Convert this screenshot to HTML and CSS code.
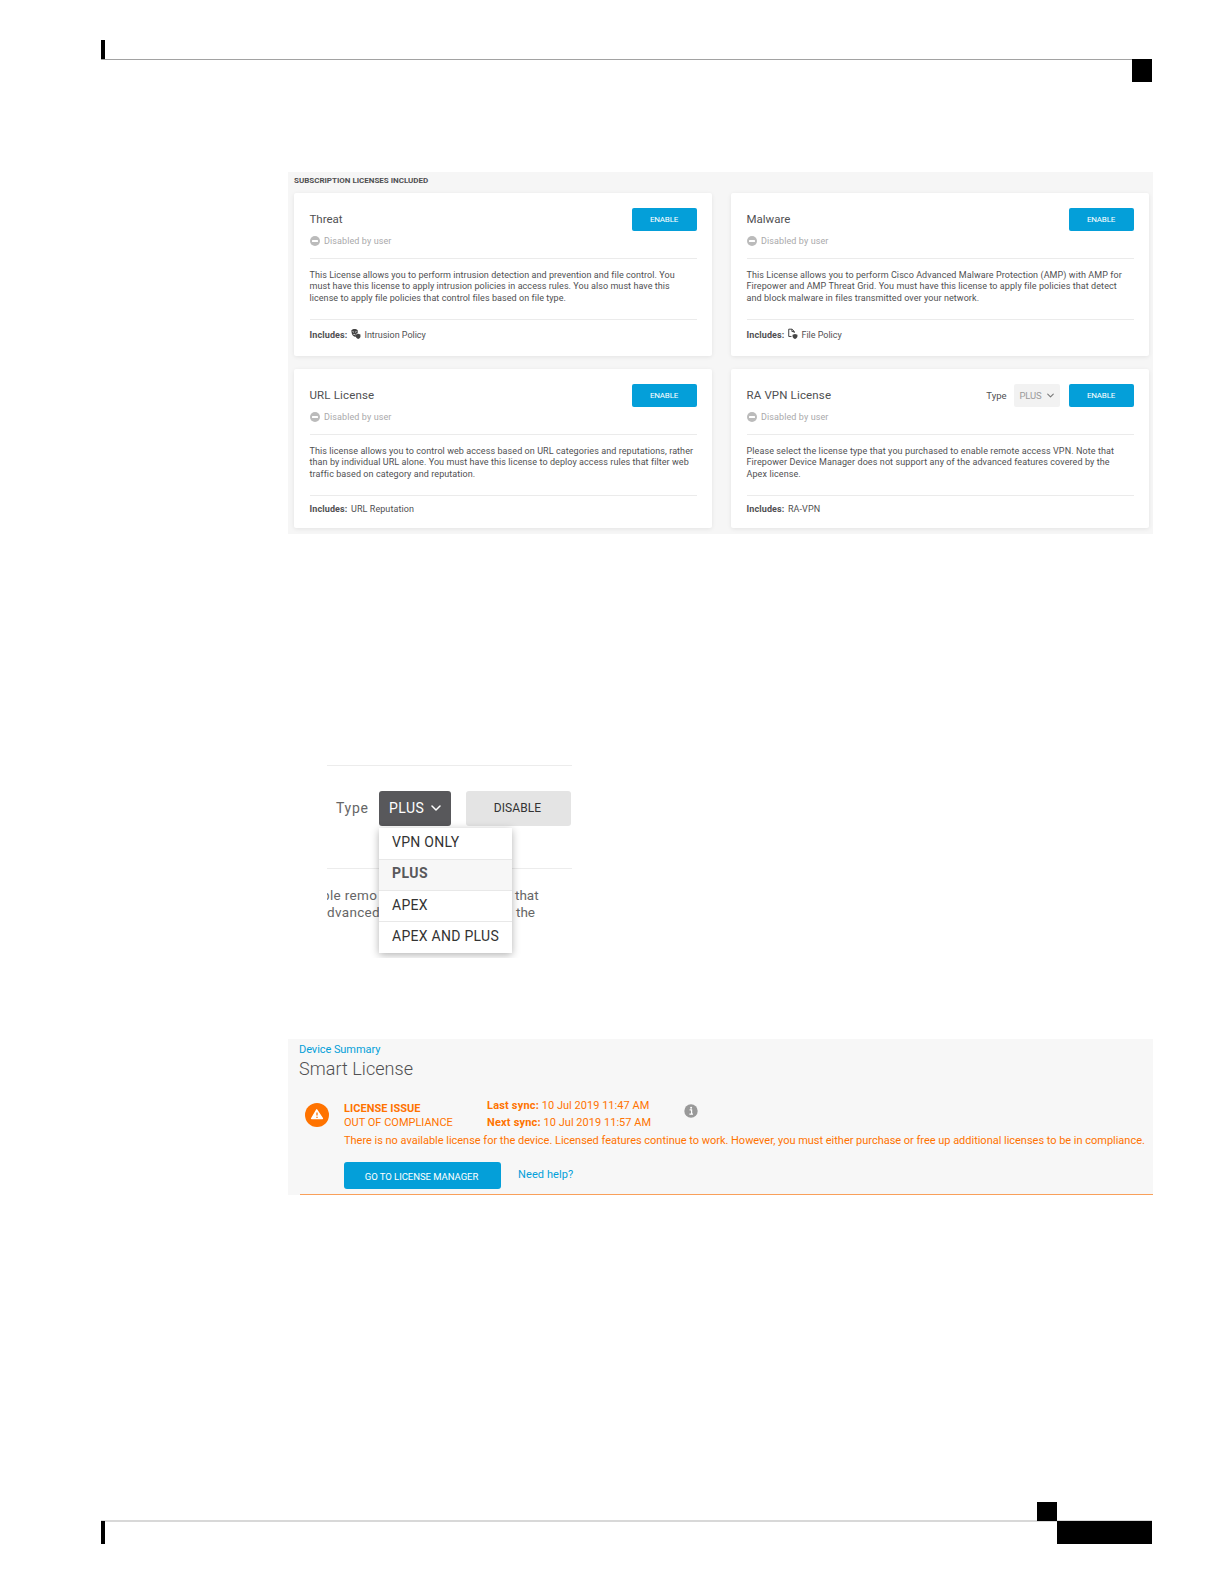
FILE: index.html
```html
<!DOCTYPE html>
<html lang="en">
<head>
<meta charset="utf-8">
<title>Smart License</title>
<link rel="stylesheet" href="styles.css">
</head>
<body>
<svg class="defs" aria-hidden="true">
  <symbol id="minus" viewBox="0 0 10 10"><circle cx="5" cy="5" r="5" fill="#bbb"/><rect x="2" y="4.1" width="6" height="1.8" rx=".5" fill="#fff"/></symbol>
  <symbol id="chevron" viewBox="0 0 10 6"><path d="M1 1l4 4 4-4" fill="none" stroke="currentColor" stroke-width="1.5" stroke-linecap="round" stroke-linejoin="round"/></symbol>
</svg>
<header class="page-head"><i class="head-tick"></i><i class="head-rule"></i><i class="head-box"></i></header>
<main>
  <section class="licenses">
    <h2 class="licenses-title">SUBSCRIPTION LICENSES INCLUDED</h2>
    <div class="cards">
      <article class="card">
        <div class="card-top"><h3>Threat</h3><button class="enable">ENABLE</button></div>
        <p class="status"><svg><use href="#minus"/></svg>Disabled by user</p>
        <p class="desc">This License allows you to perform intrusion detection and prevention and file control. You<br>must have this license to apply intrusion policies in access rules. You also must have this<br>license to apply file policies that control files based on file type.</p>
        <p class="includes"><b>Includes:</b>
          <svg class="inc-icon" viewBox="0 0 11 12"><path d="M.4 2C1.300.8 2.600.4 3.900.4 5.200.4 6.500.8 7.400 2v3.200L5.300 6v3.200C2 9.200.4 6 .4 2z" fill="#444"/><path d="M1.700 3.300l1.600.8M6.100 3.300l-1.600.8M2.600 6.500h2" stroke="#fff" stroke-width=".8"/><path d="M5.400 6.600l2.500-.9 2.500.9v1.900c0 1.500-1 2.400-2.500 3-1.500-.6-2.500-1.500-2.500-3z" fill="#444"/></svg>Intrusion Policy</p>
      </article>
      <article class="card">
        <div class="card-top"><h3>Malware</h3><button class="enable">ENABLE</button></div>
        <p class="status"><svg><use href="#minus"/></svg>Disabled by user</p>
        <p class="desc">This License allows you to perform Cisco Advanced Malware Protection (AMP) with AMP for<br>Firepower and AMP Threat Grid. You must have this license to apply file policies that detect<br>and block malware in files transmitted over your network.</p>
        <p class="includes"><b>Includes:</b>
          <svg class="inc-icon" viewBox="0 0 11 12"><path d="M3.800 8.700H.8V.7h3.700l2.300 2.400v1.800M4.300.7v2.600h2.500" fill="none" stroke="#444" stroke-width="1.100"/><path d="M5 6.900l2.700-.9 2.700.9v1.700c0 1.400-1 2.300-2.700 2.900C6 10.900 5 10 5 8.600z" fill="#444"/></svg>File Policy</p>
      </article>
      <article class="card short">
        <div class="card-top"><h3 class="wide">URL License</h3><button class="enable">ENABLE</button></div>
        <p class="status"><svg><use href="#minus"/></svg>Disabled by user</p>
        <p class="desc">This license allows you to control web access based on URL categories and reputations, rather<br>than by individual URL alone. You must have this license to deploy access rules that filter web<br>traffic based on category and reputation.</p>
        <p class="includes"><b>Includes:</b> URL Reputation</p>
      </article>
      <article class="card short">
        <div class="card-top"><h3 class="wide">RA VPN License</h3><span class="type">Type</span><span class="type-select">PLUS<svg><use href="#chevron"/></svg></span><button class="enable">ENABLE</button></div>
        <p class="status"><svg><use href="#minus"/></svg>Disabled by user</p>
        <p class="desc">Please select the license type that you purchased to enable remote access VPN. Note that<br>Firepower Device Manager does not support any of the advanced features covered by the<br>Apex license.</p>
        <p class="includes"><b>Includes:</b> RA-VPN</p>
      </article>
    </div>
  </section>

  <section class="picker">
    <div class="picker-row">
      <span class="picker-label">Type</span>
      <div class="picker-select"><span>PLUS</span><svg><use href="#chevron"/></svg>
        <ul class="menu"><li>VPN ONLY</li><li class="selected">PLUS</li><li>APEX</li><li>APEX AND PLUS</li></ul>
      </div>
      <button class="disable">DISABLE</button>
    </div>
    <div class="picker-text">
      <div><span class="cut">ble remo</span><span>that</span></div>
      <div><span class="cut second">dvanced</span><span>the</span></div>
    </div>
  </section>

  <section class="summary">
    <a class="crumb">Device Summary</a>
    <h1>Smart License</h1>
    <div class="issue">
      <svg class="warn" viewBox="0 0 24 24"><circle cx="12" cy="12" r="12" fill="#ff7300"/><path d="M11.700 6.800L6.600 15.500h10.800z" fill="#fff" stroke="#fff" stroke-width="1.400" stroke-linejoin="round"/><path d="M12 9.400v3.200M12 13.700v1.400" stroke="#ff7300" stroke-width="1.300"/></svg>
      <div class="issue-body">
        <div class="issue-top">
          <div class="state"><b>LICENSE ISSUE</b><span>OUT OF COMPLIANCE</span></div>
          <div class="sync"><span><b>Last sync:</b> 10 Jul 2019 11:47 AM</span><span><b>Next sync:</b> 10 Jul 2019 11:57 AM</span></div>
          <svg class="info" viewBox="0 0 14 14"><circle cx="7" cy="7" r="6.700" fill="#999"/><path d="M5.600 5.900h2v4M5.400 10.100h3.600" fill="none" stroke="#fff" stroke-width="1.200"/><circle cx="7.100" cy="3.700" r="1" fill="#fff"/></svg>
        </div>
        <p class="message">There is no available license for the device. Licensed features continue to work. However, you must either purchase or free up additional licenses to be in compliance.</p>
        <div class="actions"><button class="manager">GO TO LICENSE MANAGER</button><a class="help">Need help?</a></div>
      </div>
    </div>
  </section>
</main>
<footer class="page-foot"><i class="foot-box"></i><div class="foot-row"><i class="foot-tick"></i><i class="foot-block"></i></div></footer>
</body>
</html>
```
FILE: styles.css
```css
* { box-sizing: border-box; margin: 0; padding: 0; }
body { width: 1224px; height: 1584px; padding: 40px 72px 40px 101px; display: flex; flex-direction: column; background: #fff; color: #505052; font-family: Roboto, "Liberation Sans", sans-serif; overflow: hidden; }
button { border: 0; font-family: inherit; color: #fff; background: #049fd9; white-space: nowrap; }
a { color: #049fd9; }
.defs { position: absolute; width: 0; height: 0; }

.page-head { display: grid; grid-template-columns: 4px 1fr 20px; grid-template-rows: 19px 23px; height: 42px; background: linear-gradient(#a2a2a2, #a2a2a2) 0 19px / 100% 1px no-repeat; }
.head-tick { background: #000; }
.head-box { grid-column: 3; grid-row: 2; background: #000; }

main { flex: 1; margin-left: 187px; width: 865px; }

.licenses { margin-top: 90px; height: 362px; padding: 4px 4px 5px 6px; background: #f6f6f6; }
.licenses-title { height: 17px; font-size: 8px; line-height: 9px; font-weight: 700; letter-spacing: -.01px; }
.cards { display: grid; grid-template-columns: 418px 418px; column-gap: 19px; row-gap: 13px; }
.card { height: 163px; padding: 15px 15.500px 0; background: #fff; border-radius: 2px; box-shadow: 0 1px 4px rgba(0, 0, 0, .08); }
.card.short { height: 159px; }
.card-top { display: flex; height: 23px; align-items: center; }
.card h3 { flex: 1; font-size: 11.500px; font-weight: 400; line-height: 23px; }
.card h3.wide { letter-spacing: .15px; }
.enable { width: 65px; height: 23px; border-radius: 2px; font-size: 8px; letter-spacing: -.2px; }
.type { font-size: 9.500px; }
.type-select { display: flex; align-items: center; gap: 5px; width: 46px; height: 23px; margin: 0 9px 0 7px; padding-left: 6px; background: #f2f2f2; border-radius: 2px; color: #9b9b9b; font-size: 9.500px; letter-spacing: -.15px; }
.type-select svg { width: 7px; height: 5px; color: #777; }
.status { display: flex; align-items: center; gap: 4.500px; height: 28px; padding-bottom: 8px; border-bottom: 1px solid #ebebeb; color: #a9a9ab; font-size: 9px; letter-spacing: .1px; }
.status svg { width: 10px; height: 10px; }
.desc { height: 61px; padding-top: 11px; border-bottom: 1px solid #ebebeb; font-size: 9px; line-height: 11.400px; letter-spacing: .078px; white-space: nowrap; }
.card:nth-child(1) .desc { letter-spacing: .06px; }
.card:nth-child(4) .desc { letter-spacing: .098px; }
.includes { display: flex; align-items: center; gap: 3.500px; height: 30px; font-size: 9px; letter-spacing: -.02px; }
.includes b { letter-spacing: .12px; }
.short .includes { height: 26px; letter-spacing: .08px; }
.inc-icon { width: 10px; height: 12px; margin-top: -2px; }

.picker { width: 245px; height: 193px; margin: 231px 0 0 39px; padding-top: 25px; overflow: hidden; border-top: 1px solid #ececec; font-size: 14px; }
.picker-row { display: flex; align-items: flex-start; height: 78px; padding-left: 9px; border-bottom: 1px solid #ececec; }
.picker-label { width: 43px; font-size: 14px; line-height: 35px; letter-spacing: .7px; color: #666; }
.picker-select { position: relative; display: flex; align-items: center; gap: 7px; width: 72px; height: 35px; padding: 0 0 2px 10px; border-radius: 3px; background: #58585b; color: #fff; letter-spacing: .45px; }
.picker-select > svg { width: 10px; height: 6px; }
.disable { width: 105px; height: 35px; margin-left: 15px; padding: 0 2px 2px 0; border-radius: 3px; background: #e4e4e4; color: #333; font-size: 12px; letter-spacing: .07px; }
.menu { position: absolute; z-index: 1; left: 0; top: 37px; width: 133px; height: 125px; padding-top: 1px; list-style: none; background: #fff; box-shadow: 0 2px 8px rgba(0, 0, 0, .3); color: #333; letter-spacing: .28px; }
.menu li { height: 31px; padding-left: 13px; line-height: 29px; border-bottom: 1px solid #e8e8e8; }
.menu li:nth-child(-n+2) { line-height: 27px; }
.menu li.selected { background: #f7f7f7; font-weight: 700; letter-spacing: .45px; color: #58585b; }
.menu li:last-child { border: 0; }
.picker-text { padding: 18px 0 0; color: #666; font-size: 13.500px; line-height: 17px; letter-spacing: .33px; }
.picker-text div { display: flex; }
.picker-text span + span { letter-spacing: 0; }
.cut { width: 188px; text-indent: -5px; overflow: hidden; }
.cut.second { width: 189px; text-indent: 0; }

.summary { height: 156px; margin-top: 81px; padding: 3px 0 0 11px; background: linear-gradient(#f9a05a, #f9a05a) 12px 155px / 853px 1px no-repeat, #f7f7f7; }
.crumb { display: block; height: 16px; font-size: 11px; line-height: 15px; letter-spacing: -.06px; }
.summary h1 { height: 24px; font-size: 18px; line-height: 21px; font-weight: 300; letter-spacing: .05px; }
.issue { display: flex; padding: 21px 0 0 6px; color: #ff7300; font-size: 11px; white-space: nowrap; }
.warn { width: 24px; height: 24px; margin-right: 15px; flex: none; }
.issue-body { margin-top: -6px; }
.issue-top { display: flex; height: 35px; }
.state { display: flex; flex-direction: column; width: 143px; padding-top: 5px; line-height: 14px; }
.state b { letter-spacing: .02px; }
.sync { display: flex; flex-direction: column; width: 182px; line-height: 17px; letter-spacing: .03px; }
.sync b { letter-spacing: .18px; }
.info { width: 14px; height: 14px; margin: 7px 0 0 15px; }
.message { height: 30px; line-height: 17px; letter-spacing: -.02px; }
.actions { display: flex; align-items: flex-start; gap: 17px; }
.manager { width: 157px; height: 27px; padding: 1px 2px 0 0; border-radius: 3px; font-size: 9.500px; letter-spacing: -.04px; }
.help { line-height: 25px; letter-spacing: .1px; }

.page-foot { display: flex; flex-direction: column; height: 42px; background: linear-gradient(#d8d8d8, #d8d8d8) 0 18px / 100% 2px no-repeat; width: 1051px; }
.foot-box { align-self: flex-end; width: 20px; height: 19px; margin-right: 95px; background: #000; }
.foot-row { display: flex; justify-content: space-between; height: 23px; }
.foot-tick { width: 4px; background: #000; }
.foot-block { width: 95px; background: #000; }
```
